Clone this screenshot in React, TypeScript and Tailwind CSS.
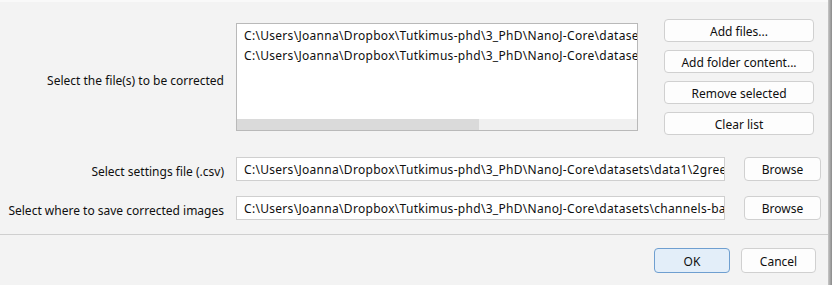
import React from "react";

const font = { fontFamily: '"Segoe UI", "Noto Sans", sans-serif' };

function Btn({ children, className = "" }: { children: React.ReactNode; className?: string }) {
  return (
    <div
      className={
        "flex items-center justify-center rounded-[4px] border border-[#d0d0d0] bg-[#fdfdfd] pt-[3px] text-[12px] text-[#0f0f0f] " +
        className
      }
    >
      {children}
    </div>
  );
}

export default function App() {
  const p1 = "C:\\Users\\Joanna\\Dropbox\\Tutkimus-phd\\3_PhD\\NanoJ-Core\\datase";
  const p2 = "C:\\Users\\Joanna\\Dropbox\\Tutkimus-phd\\3_PhD\\NanoJ-Core\\datase";
  const s1 = "C:\\Users\\Joanna\\Dropbox\\Tutkimus-phd\\3_PhD\\NanoJ-Core\\datasets\\data1\\2gree";
  const s2 = "C:\\Users\\Joanna\\Dropbox\\Tutkimus-phd\\3_PhD\\NanoJ-Core\\datasets\\channels-ba";
  return (
    <div className="flex w-[832px] h-[285px] bg-[#f3f3f3] overflow-hidden" style={font}>
      <div className="flex w-[828px] flex-col">
        <div className="h-[2px] bg-[#f9f9f9]" />
        <div className="flex flex-col pt-[17px]">
          {/* Row 1 */}
          <div className="flex items-center">
            <div className="w-[236px] pr-[12px] pt-[7px] text-right text-[12px] text-[#0f0f0f]">
              Select the file(s) to be corrected
            </div>
            <div className="flex h-[108px] w-[402px] flex-col border border-[#b9b9b9] bg-white">
              <div className="flex flex-1 flex-col overflow-hidden pl-[7px] pt-[2px] text-[12px] leading-[20px] tracking-[0.3px] text-[#0f0f0f] whitespace-nowrap">
                <div>{p1}</div>
                <div>{p2}</div>
              </div>
              <div className="flex h-[11px] bg-[#f0f0f0]">
                <div className="w-[242px] bg-[#dadada]" />
              </div>
            </div>
            <div className="ml-[26px] flex w-[150px] flex-col gap-[8px]">
              <Btn className="h-[23px]">Add files...</Btn>
              <Btn className="h-[23px]">Add folder content...</Btn>
              <Btn className="h-[23px]">Remove selected</Btn>
              <Btn className="h-[23px]">Clear list</Btn>
            </div>
          </div>
          {/* Row 2 */}
          <div className="mt-[21px] flex items-center">
            <div className="w-[236px] pr-[12px] pt-[7px] text-right text-[12px] text-[#0f0f0f]">
              Select settings file (.csv)
            </div>
            <div className="flex h-[24px] w-[489px] items-center overflow-hidden border border-[#cfcfcf] bg-white pl-[7px] pt-[3px] text-[12px] tracking-[0.3px] whitespace-nowrap text-[#0f0f0f]">
              {s1}
            </div>
            <Btn className="ml-[19px] h-[24px] w-[77px]">Browse</Btn>
          </div>
          {/* Row 3 */}
          <div className="mt-[14px] flex items-center">
            <div className="w-[236px] pr-[12px] pt-[7px] text-right text-[12px] text-[#0f0f0f] whitespace-nowrap">
              Select where to save corrected images
            </div>
            <div className="flex h-[24px] w-[489px] items-center overflow-hidden border border-[#cfcfcf] bg-white pl-[7px] pt-[3px] text-[12px] tracking-[0.3px] whitespace-nowrap text-[#0f0f0f]">
              {s2}
            </div>
            <Btn className="ml-[19px] h-[24px] w-[77px]">Browse</Btn>
          </div>
        </div>
        <div className="mt-[14px] h-[1px] bg-[#cfcfcf]" />
        <div className="flex justify-end pr-[12px] pt-[13px]">
          <div className="flex h-[25px] w-[76px] items-center justify-center rounded-[4px] border border-[#6f9fd0] bg-[#e3eef9] pt-[3px] text-[12px] text-[#0f0f0f]">
            OK
          </div>
          <Btn className="ml-[11px] h-[25px] w-[75px]">Cancel</Btn>
        </div>
      </div>
      <div className="w-[4px] bg-gradient-to-r from-[#c8c8c8] to-[#8a8a8a]" />
    </div>
  );
}
